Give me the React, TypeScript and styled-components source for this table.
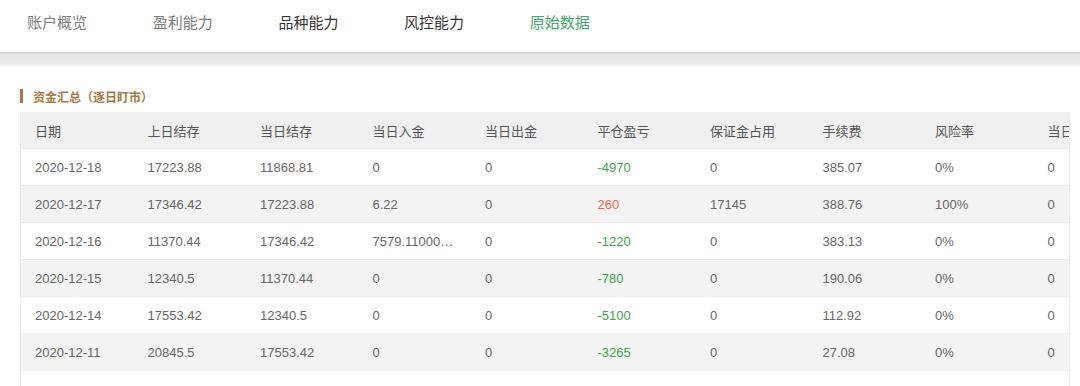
import styled, { createGlobalStyle } from "styled-components";

const GlobalStyle = createGlobalStyle`
  body {
    margin: 0;
    background: #fff;
    font-family: "Liberation Sans", "Noto Sans CJK SC", sans-serif;
  }
`;

type Tone = "muted" | "dark" | "active";

const tabs: { label: string; tone: Tone }[] = [
  { label: "账户概览", tone: "muted" },
  { label: "盈利能力", tone: "muted" },
  { label: "品种能力", tone: "dark" },
  { label: "风控能力", tone: "dark" },
  { label: "原始数据", tone: "active" },
];

const columns = [
  "日期",
  "上日结存",
  "当日结存",
  "当日入金",
  "当日出金",
  "平仓盈亏",
  "保证金占用",
  "手续费",
  "风险率",
  "当日盈亏",
  "可用资金",
];

interface Row {
  date: string;
  prev: string;
  curr: string;
  deposit: string;
  withdraw: string;
  pnl: number;
  margin: string;
  fee: string;
  risk: string;
}

const rows: Row[] = [
  { date: "2020-12-18", prev: "17223.88", curr: "11868.81", deposit: "0", withdraw: "0", pnl: -4970, margin: "0", fee: "385.07", risk: "0%" },
  { date: "2020-12-17", prev: "17346.42", curr: "17223.88", deposit: "6.22", withdraw: "0", pnl: 260, margin: "17145", fee: "388.76", risk: "100%" },
  { date: "2020-12-16", prev: "11370.44", curr: "17346.42", deposit: "7579.110000000001", withdraw: "0", pnl: -1220, margin: "0", fee: "383.13", risk: "0%" },
  { date: "2020-12-15", prev: "12340.5", curr: "11370.44", deposit: "0", withdraw: "0", pnl: -780, margin: "0", fee: "190.06", risk: "0%" },
  { date: "2020-12-14", prev: "17553.42", curr: "12340.5", deposit: "0", withdraw: "0", pnl: -5100, margin: "0", fee: "112.92", risk: "0%" },
  { date: "2020-12-11", prev: "20845.5", curr: "17553.42", deposit: "0", withdraw: "0", pnl: -3265, margin: "0", fee: "27.08", risk: "0%" },
];

export default function App() {
  return (
    <>
      <GlobalStyle />
      <Nav>
        {tabs.map((t) => (
          <Tab key={t.label} tone={t.tone}>
            {t.label}
          </Tab>
        ))}
      </Nav>
      <Band />
      <Content>
        <SectionTitle>资金汇总（逐日盯市）</SectionTitle>
        <TableWrap>
          <Table>
            <colgroup>
              {columns.map((c) => (
                <col key={c} />
              ))}
            </colgroup>
            <thead>
              <tr>
                {columns.map((c) => (
                  <Th key={c}>{c}</Th>
                ))}
              </tr>
            </thead>
            <tbody>
              {rows.map((r, i) => (
                <BodyRow key={r.date} striped={i % 2 === 1}>
                  <Td>{r.date}</Td>
                  <Td>{r.prev}</Td>
                  <Td>{r.curr}</Td>
                  <Td>{r.deposit}</Td>
                  <Td>{r.withdraw}</Td>
                  <Td tone={r.pnl < 0 ? "loss" : "gain"}>{r.pnl}</Td>
                  <Td>{r.margin}</Td>
                  <Td>{r.fee}</Td>
                  <Td>{r.risk}</Td>
                  <Td>0</Td>
                  <Td>0</Td>
                </BodyRow>
              ))}
            </tbody>
          </Table>
          <Filler />
        </TableWrap>
      </Content>
    </>
  );
}

const Nav = styled.nav`
  display: flex;
  gap: 65.7px;
  height: 52px;
  padding: 12px 0 0 27px;
  box-sizing: border-box;
  background: #fff;
`;

const toneColor: Record<Tone, string> = {
  muted: "#7a7a7a",
  dark: "#333",
  active: "#3fa86b",
};

const Tab = styled.div<{ tone: Tone }>`
  font-family: "Noto Sans CJK SC", sans-serif;
  font-size: 15px;
  line-height: 20px;
  width: 60px;
  white-space: nowrap;
  color: ${(p) => toneColor[p.tone]};
`;

const Band = styled.div`
  height: 14px;
  background: linear-gradient(#d2d2d2 0, #e6e6e6 3px, #e9e9e9 10px, #f2f2f2 100%);
`;

const Content = styled.div`
  padding: 23px 10px 0 20px;
`;

const SectionTitle = styled.h3`
  margin: 0 0 9px;
  display: flex;
  align-items: center;
  gap: 10px;
  height: 14px;
  font-family: "Noto Sans CJK SC", sans-serif;
  font-size: 12px;
  font-weight: bold;
  color: #a37a44;

  &::before {
    content: "";
    width: 3px;
    height: 14px;
    background: #a37a44;
  }
`;

const TableWrap = styled.div`
  width: 1050px;
  overflow: hidden;
  border-left: 1px solid #ececec;
  border-right: 1px solid #ececec;
  box-sizing: border-box;
`;

const Table = styled.table`
  border-collapse: collapse;
  table-layout: fixed;
  width: 1237px;
  col {
    width: 112.5px;
  }
`;

const Th = styled.th`
  height: 36px;
  padding: 0 14px;
  text-align: left;
  font-family: "Noto Sans CJK SC", sans-serif;
  font-size: 13px;
  font-weight: normal;
  color: #555;
  background: #f0f0f0;
  white-space: nowrap;
  overflow: hidden;
`;

const BodyRow = styled.tr<{ striped: boolean }>`
  background: ${(p) => (p.striped ? "#f3f3f3" : "#fff")};
  border-top: 1px solid #ebebeb;
`;

const Td = styled.td<{ tone?: "gain" | "loss" }>`
  height: 36px;
  padding: 0 14px;
  font-size: 13px;
  color: ${(p) =>
    p.tone === "loss" ? "#3ea54a" : p.tone === "gain" ? "#f06a45" : "#666"};
  white-space: nowrap;
  overflow: hidden;
  text-overflow: ellipsis;
`;

const Filler = styled.div`
  height: 16px;
  border-top: 1px solid #ebebeb;
`;
